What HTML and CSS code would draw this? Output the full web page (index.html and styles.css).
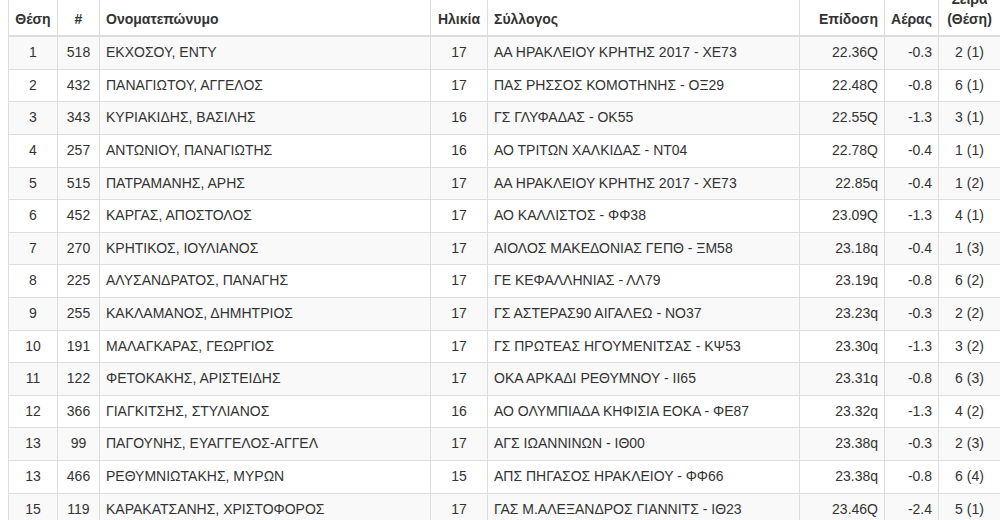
FILE: index.html
```html
<!DOCTYPE html>
<html lang="el">
<head>
<meta charset="utf-8">
<title>Αποτελέσματα</title>
<link rel="stylesheet" href="styles.css">
</head>
<body>
<div class="wrap">
<table class="results">
  <colgroup>
    <col class="c-pos"><col class="c-bib"><col class="c-name"><col class="c-age"><col class="c-club"><col class="c-mark"><col class="c-wind"><col class="c-heat">
  </colgroup>
  <thead>
    <tr>
      <th class="ctr">Θέση</th>
      <th class="ctr">#</th>
      <th class="lft">Ονοματεπώνυμο</th>
      <th class="ctr">Ηλικία</th>
      <th class="lft">Σύλλογος</th>
      <th class="rgt">Επίδοση</th>
      <th class="rgt">Αέρας</th>
      <th class="ctr">Σειρά (Θέση)</th>
    </tr>
  </thead>
  <tbody>
    <tr><td class="ctr">1</td><td class="ctr">518</td><td>ΕΚΧΟΣΟΥ, ΕΝΤΥ</td><td class="ctr">17</td><td>ΑΑ ΗΡΑΚΛΕΙΟΥ ΚΡΗΤΗΣ 2017 - ΧΕ73</td><td class="rgt">22.36Q</td><td class="rgt">-0.3</td><td class="ctr">2 (1)</td></tr>
    <tr><td class="ctr">2</td><td class="ctr">432</td><td>ΠΑΝΑΓΙΩΤΟΥ, ΑΓΓΕΛΟΣ</td><td class="ctr">17</td><td>ΠΑΣ ΡΗΣΣΟΣ ΚΟΜΟΤΗΝΗΣ - ΟΞ29</td><td class="rgt">22.48Q</td><td class="rgt">-0.8</td><td class="ctr">6 (1)</td></tr>
    <tr><td class="ctr">3</td><td class="ctr">343</td><td>ΚΥΡΙΑΚΙΔΗΣ, ΒΑΣΙΛΗΣ</td><td class="ctr">16</td><td>ΓΣ ΓΛΥΦΑΔΑΣ - ΟΚ55</td><td class="rgt">22.55Q</td><td class="rgt">-1.3</td><td class="ctr">3 (1)</td></tr>
    <tr><td class="ctr">4</td><td class="ctr">257</td><td>ΑΝΤΩΝΙΟΥ, ΠΑΝΑΓΙΩΤΗΣ</td><td class="ctr">16</td><td>ΑΟ ΤΡΙΤΩΝ ΧΑΛΚΙΔΑΣ - ΝΤ04</td><td class="rgt">22.78Q</td><td class="rgt">-0.4</td><td class="ctr">1 (1)</td></tr>
    <tr><td class="ctr">5</td><td class="ctr">515</td><td>ΠΑΤΡΑΜΑΝΗΣ, ΑΡΗΣ</td><td class="ctr">17</td><td>ΑΑ ΗΡΑΚΛΕΙΟΥ ΚΡΗΤΗΣ 2017 - ΧΕ73</td><td class="rgt">22.85q</td><td class="rgt">-0.4</td><td class="ctr">1 (2)</td></tr>
    <tr><td class="ctr">6</td><td class="ctr">452</td><td>ΚΑΡΓΑΣ, ΑΠΟΣΤΟΛΟΣ</td><td class="ctr">17</td><td>ΑΟ ΚΑΛΛΙΣΤΟΣ - ΦΦ38</td><td class="rgt">23.09Q</td><td class="rgt">-1.3</td><td class="ctr">4 (1)</td></tr>
    <tr><td class="ctr">7</td><td class="ctr">270</td><td>ΚΡΗΤΙΚΟΣ, ΙΟΥΛΙΑΝΟΣ</td><td class="ctr">17</td><td>ΑΙΟΛΟΣ ΜΑΚΕΔΟΝΙΑΣ ΓΕΠΘ - ΞΜ58</td><td class="rgt">23.18q</td><td class="rgt">-0.4</td><td class="ctr">1 (3)</td></tr>
    <tr><td class="ctr">8</td><td class="ctr">225</td><td>ΑΛΥΣΑΝΔΡΑΤΟΣ, ΠΑΝΑΓΗΣ</td><td class="ctr">17</td><td>ΓΕ ΚΕΦΑΛΛΗΝΙΑΣ - ΛΛ79</td><td class="rgt">23.19q</td><td class="rgt">-0.8</td><td class="ctr">6 (2)</td></tr>
    <tr><td class="ctr">9</td><td class="ctr">255</td><td>ΚΑΚΛΑΜΑΝΟΣ, ΔΗΜΗΤΡΙΟΣ</td><td class="ctr">17</td><td>ΓΣ ΑΣΤΕΡΑΣ90 ΑΙΓΑΛΕΩ - ΝΟ37</td><td class="rgt">23.23q</td><td class="rgt">-0.3</td><td class="ctr">2 (2)</td></tr>
    <tr><td class="ctr">10</td><td class="ctr">191</td><td>ΜΑΛΑΓΚΑΡΑΣ, ΓΕΩΡΓΙΟΣ</td><td class="ctr">17</td><td>ΓΣ ΠΡΩΤΕΑΣ ΗΓΟΥΜΕΝΙΤΣΑΣ - ΚΨ53</td><td class="rgt">23.30q</td><td class="rgt">-1.3</td><td class="ctr">3 (2)</td></tr>
    <tr><td class="ctr">11</td><td class="ctr">122</td><td>ΦΕΤΟΚΑΚΗΣ, ΑΡΙΣΤΕΙΔΗΣ</td><td class="ctr">17</td><td>ΟΚΑ ΑΡΚΑΔΙ ΡΕΘΥΜΝΟΥ - ΙΙ65</td><td class="rgt">23.31q</td><td class="rgt">-0.8</td><td class="ctr">6 (3)</td></tr>
    <tr><td class="ctr">12</td><td class="ctr">366</td><td>ΓΙΑΓΚΙΤΣΗΣ, ΣΤΥΛΙΑΝΟΣ</td><td class="ctr">16</td><td>ΑΟ ΟΛΥΜΠΙΑΔΑ ΚΗΦΙΣΙΑ ΕΟΚΑ - ΦΕ87</td><td class="rgt">23.32q</td><td class="rgt">-1.3</td><td class="ctr">4 (2)</td></tr>
    <tr><td class="ctr">13</td><td class="ctr">99</td><td>ΠΑΓΟΥΝΗΣ, ΕΥΑΓΓΕΛΟΣ-ΑΓΓΕΛ</td><td class="ctr">17</td><td>ΑΓΣ ΙΩΑΝΝΙΝΩΝ - ΙΘ00</td><td class="rgt">23.38q</td><td class="rgt">-0.3</td><td class="ctr">2 (3)</td></tr>
    <tr><td class="ctr">13</td><td class="ctr">466</td><td>ΡΕΘΥΜΝΙΩΤΑΚΗΣ, ΜΥΡΩΝ</td><td class="ctr">15</td><td>ΑΠΣ ΠΗΓΑΣΟΣ ΗΡΑΚΛΕΙΟΥ - ΦΦ66</td><td class="rgt">23.38q</td><td class="rgt">-0.8</td><td class="ctr">6 (4)</td></tr>
    <tr><td class="ctr">15</td><td class="ctr">119</td><td>ΚΑΡΑΚΑΤΣΑΝΗΣ, ΧΡΙΣΤΟΦΟΡΟΣ</td><td class="ctr">17</td><td>ΓΑΣ Μ.ΑΛΕΞΑΝΔΡΟΣ ΓΙΑΝΝΙΤΣ - ΙΘ23</td><td class="rgt">23.46Q</td><td class="rgt">-2.4</td><td class="ctr">5 (1)</td></tr>
  </tbody>
</table>
</div>
</body>
</html>
```

FILE: styles.css
```css
html, body {
  background: #fff;
}
body {
  margin: 0 0 0 8px;
  font-family: "Liberation Sans", Arial, Helvetica, sans-serif;
  font-size: 14px;
  color: #333;
  overflow: hidden;
}
.wrap {
  margin-top: -17px;
}
.results {
  width: 992px;
  table-layout: fixed;
  border-collapse: collapse;
  border: 1px solid #ddd;
}
.c-pos { width: 49px; }
.c-bib { width: 42px; }
.c-name { width: 331px; }
.c-age { width: 57px; }
.c-club { width: 312px; }
.c-mark { width: 85px; }
.c-wind { width: 54px; }
.c-heat { width: 62px; }

.results th,
.results td {
  padding: 6px 6px;
  line-height: 19.6px;
  border: 1px solid #ddd;
  white-space: nowrap;
  overflow: hidden;
}
.results th {
  font-weight: bold;
  vertical-align: bottom;
  border-bottom: 2px solid #ddd;
  white-space: normal;
}
.results td {
  vertical-align: top;
}
.results tbody tr:nth-child(odd) {
  background: #f9f9f9;
}
.ctr { text-align: center; }
.lft { text-align: left; }
.rgt { text-align: right; }
```
